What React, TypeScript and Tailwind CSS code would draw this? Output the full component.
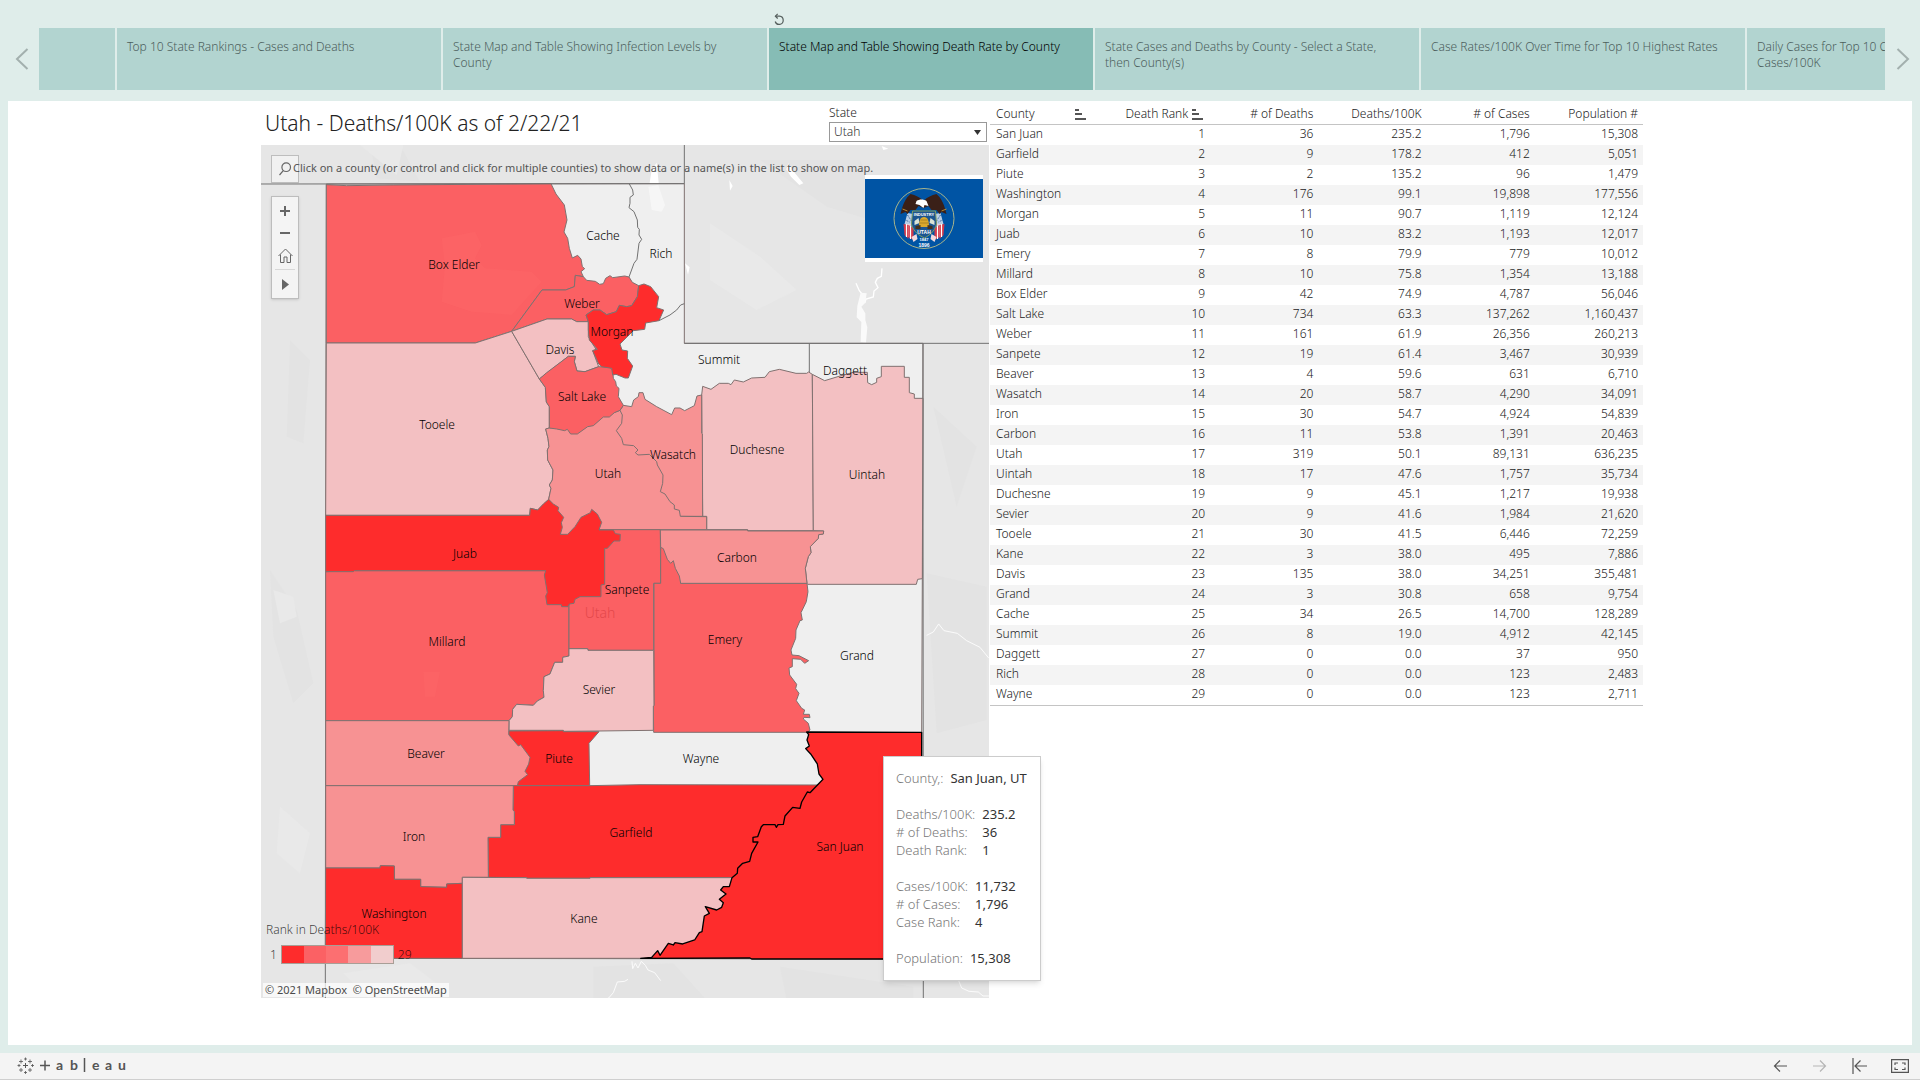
import React from "react";

const FONT = "font-['Noto_Sans','Open_Sans',sans-serif]";

const TABS = [
  { label: "", active: false },
  { label: "Top 10 State Rankings - Cases and Deaths", active: false },
  { label: "State Map and Table Showing Infection Levels by County", active: false },
  { label: "State Map and Table Showing Death Rate by County", active: true },
  { label: "State Cases and Deaths by County - Select a State, then County(s)", active: false },
  { label: "Case Rates/100K Over Time for Top 10 Highest Rates", active: false },
  { label: "Daily Cases for Top 10 Counties by Cases/100K", active: false },
];

const ROWS: string[][] = [
  ["San Juan", "1", "36", "235.2", "1,796", "15,308"],
  ["Garfield", "2", "9", "178.2", "412", "5,051"],
  ["Piute", "3", "2", "135.2", "96", "1,479"],
  ["Washington", "4", "176", "99.1", "19,898", "177,556"],
  ["Morgan", "5", "11", "90.7", "1,119", "12,124"],
  ["Juab", "6", "10", "83.2", "1,193", "12,017"],
  ["Emery", "7", "8", "79.9", "779", "10,012"],
  ["Millard", "8", "10", "75.8", "1,354", "13,188"],
  ["Box Elder", "9", "42", "74.9", "4,787", "56,046"],
  ["Salt Lake", "10", "734", "63.3", "137,262", "1,160,437"],
  ["Weber", "11", "161", "61.9", "26,356", "260,213"],
  ["Sanpete", "12", "19", "61.4", "3,467", "30,939"],
  ["Beaver", "13", "4", "59.6", "631", "6,710"],
  ["Wasatch", "14", "20", "58.7", "4,290", "34,091"],
  ["Iron", "15", "30", "54.7", "4,924", "54,839"],
  ["Carbon", "16", "11", "53.8", "1,391", "20,463"],
  ["Utah", "17", "319", "50.1", "89,131", "636,235"],
  ["Uintah", "18", "17", "47.6", "1,757", "35,734"],
  ["Duchesne", "19", "9", "45.1", "1,217", "19,938"],
  ["Sevier", "20", "9", "41.6", "1,984", "21,620"],
  ["Tooele", "21", "30", "41.5", "6,446", "72,259"],
  ["Kane", "22", "3", "38.0", "495", "7,886"],
  ["Davis", "23", "135", "38.0", "34,251", "355,481"],
  ["Grand", "24", "3", "30.8", "658", "9,754"],
  ["Cache", "25", "34", "26.5", "14,700", "128,289"],
  ["Summit", "26", "8", "19.0", "4,912", "42,145"],
  ["Daggett", "27", "0", "0.0", "37", "950"],
  ["Rich", "28", "0", "0.0", "123", "2,483"],
  ["Wayne", "29", "0", "0.0", "123", "2,711"],
];

const RED = "#fe2c2c";
const MID = "#fb6063";
const SOFT = "#f79293";
const PALE = "#f3c0c2";
const NONE = "#efefef";

const COUNTIES: { name: string; fill: string; points: string }[] = [
  { name: "Utah state", fill: NONE, points: "199,132 1273,131 1273,610 1989,610 1987,1316 1985,1776 1985,2457 196,2455 198,610" },
  { name: "Duchesne", fill: PALE, points: "1325,765 1328,739 1353,748 1378,730 1405,730 1413,734 1423,720 1450,726 1475,714 1515,712 1528,695 1558,688 1608,700 1640,700 1646,696 1657,703 1660,1172 1463,1172 1463,1169 1340,1169 1340,1129 1328,1129" },
  { name: "Uintah", fill: PALE, points: "1657,703 1694,722 1740,708 1780,697 1822,697 1823,728 1835,734 1850,727 1850,715 1864,710 1864,679 1933,679 1933,712 1948,712 1948,758 1963,762 1963,775 1989,775 1987,1316 1973,1318 1969,1333 1643,1333 1641,1330 1636,1285 1645,1250 1653,1238 1651,1220 1675,1195 1676,1184 1690,1182 1691,1173 1660,1172" },
  { name: "Box Elder", fill: MID, points: "199,134 260,137 400,135 873,131 888,162 913,195 921,240 912,276 923,295 928,325 937,354 953,346 963,357 967,380 974,386 963,395 970,410 946,406 943,440 917,450 846,450 755,574 646,609 199,609" },
  { name: "Tooele", fill: PALE, points: "199,609 646,609 755,574 838,717 856,742 859,786 868,800 868,864 857,867 864,895 867,920 862,930 863,960 879,990 877,1020 868,1035 873,1045 866,1078 833,1110 811,1105 809,1126 197,1126" },
  { name: "Wasatch", fill: SOFT, points: "1080,811 1090,796 1115,800 1121,780 1135,770 1137,758 1149,758 1155,778 1190,800 1235,824 1244,804 1260,804 1274,812 1303,797 1311,768 1325,765 1325,880 1327,882 1328,1129 1261,1129 1060,900" },
  { name: "Utah", fill: SOFT, points: "868,864 1000,840 1080,811 1087,825 1085,850 1069,872 1085,895 1090,914 1121,917 1134,930 1126,938 1134,945 1168,943 1190,965 1192,975 1209,1005 1208,1030 1201,1055 1215,1062 1230,1085 1243,1095 1243,1107 1258,1111 1261,1129 1340,1130 1340,1169 1015,1169 905,1190 866,1078 873,1045 868,1035 877,1020 879,990 863,960 862,930 867,920 864,895 857,867" },
  { name: "Weber", fill: MID, points: "846,450 917,450 943,440 946,406 970,410 980,421 1006,424 1019,433 1030,431 1037,415 1050,407 1058,413 1094,408 1107,411 1117,427 1136,437 1132,470 1115,497 1100,500 1078,496 1069,515 1040,524 1020,510 1000,510 978,525 985,545 950,545 935,537 861,537 755,574" },
  { name: "Davis", fill: PALE, points: "755,574 861,537 935,537 950,545 985,545 985,590 1008,628 998,632 1016,680 975,695 951,693 943,665 946,649 925,649 838,717" },
  { name: "Salt Lake", fill: MID, points: "838,717 860,698 900,668 925,649 946,649 943,665 951,693 975,695 1016,680 1050,682 1058,690 1060,715 1067,725 1069,738 1077,745 1075,770 1090,796 1080,811 1063,818 1048,831 1030,831 1000,857 983,860 952,882 932,882 922,868 914,872 890,867 868,864 868,800 859,786 856,742" },
  { name: "Morgan", fill: RED, points: "978,525 1000,510 1020,510 1040,524 1069,515 1078,496 1100,500 1115,497 1132,470 1136,437 1152,432 1172,440 1196,470 1190,503 1211,510 1197,542 1157,549 1154,568 1120,572 1080,612 1086,630 1103,633 1102,655 1118,678 1105,714 1095,714 1068,703 1058,705 1055,685 1025,680 1016,672 998,632 1012,628 988,600 985,570 985,545" },
  { name: "Millard", fill: MID, points: "197,1295 283,1292 857,1292 927,1392 927,1548 908,1552 908,1567 884,1567 870,1602 852,1610 850,1652 852,1672 832,1683 820,1696 770,1693 758,1708 757,1730 747,1742 197,1742" },
  { name: "Sanpete", fill: MID, points: "1017,1169 1201,1169 1202,1330 1181,1330 1181,1531 984,1531 983,1526 927,1526 927,1380 1000,1300" },
  { name: "Juab", fill: RED, points: "197,1126 809,1126 811,1105 833,1110 850,1092 866,1078 880,1092 896,1102 894,1112 911,1132 904,1148 907,1162 901,1183 923,1183 945,1160 963,1132 991,1118 995,1108 1012,1122 1025,1147 1017,1170 1060,1170 1066,1181 1081,1183 1080,1203 1062,1203 1042,1225 1034,1225 1034,1333 1023,1335 1023,1370 960,1370 945,1378 942,1390 928,1392 924,1400 905,1400 904,1394 861,1394 857,1368 862,1358 853,1305 857,1292 283,1292 280,1295 197,1295" },
  { name: "Emery", fill: MID, points: "1202,1222 1262,1222 1262,1330 1641,1330 1644,1355 1639,1385 1623,1418 1627,1440 1620,1442 1608,1470 1607,1495 1593,1530 1596,1545 1617,1547 1646,1562 1634,1570 1622,1558 1597,1556 1597,1580 1587,1584 1589,1605 1610,1633 1607,1646 1617,1660 1609,1682 1625,1705 1634,1710 1630,1723 1648,1723 1650,1733 1632,1732 1630,1737 1645,1750 1650,1770 1642,1777 1181,1777 1180,1698 1182,1697 1182,1330 1202,1330" },
  { name: "Carbon", fill: SOFT, points: "1201,1170 1463,1170 1463,1173 1691,1173 1690,1182 1676,1184 1675,1195 1651,1220 1653,1238 1645,1250 1636,1285 1641,1330 1262,1330 1258,1308 1246,1285 1240,1262 1232,1270 1222,1258 1210,1226 1202,1222" },
  { name: "Sevier", fill: PALE, points: "927,1526 983,1526 984,1531 1181,1531 1182,1697 1180,1698 1180,1771 1017,1773 910,1774 910,1771 747,1771 747,1742 757,1730 758,1708 770,1693 820,1696 832,1683 852,1672 850,1652 852,1610 870,1602 884,1567 908,1567 908,1552 927,1548" },
  { name: "Piute", fill: RED, points: "746,1773 910,1772 910,1775 1017,1775 987,1810 989,1937 760,1937" },
  { name: "Beaver", fill: SOFT, points: "197,1742 747,1742 746,1784 775,1818 782,1814 810,1852 806,1872 795,1894 803,1904 775,1925 772,1937 197,1937" },
  { name: "Garfield", fill: RED, points: "760,1937 989,1937 1140,1934 1700,1935 1417,2213 990,2213 990,2215 800,2215 800,2213 685,2212 684,2092 722,2092 722,2054 763,2054 763,2015 759,2010" },
  { name: "Iron", fill: SOFT, points: "197,1937 760,1937 759,2010 763,2015 763,2054 722,2054 722,2092 684,2092 685,2212 607,2212 607,2230 560,2232 560,2242 482,2240 482,2218 403,2218 403,2178 361,2177 360,2184 197,2184" },
  { name: "Washington", fill: RED, points: "197,2184 360,2184 361,2177 403,2178 403,2218 482,2218 482,2240 560,2242 560,2232 607,2230 607,2455 196,2455" },
  { name: "Kane", fill: PALE, points: "607,2212 800,2213 800,2215 990,2215 990,2213 1417,2213 1500,2300 1300,2455 607,2455" },
];

const SAN_JUAN =
  "1142,2455 1175,2452 1193,2432 1200,2446 1225,2410 1240,2415 1245,2408 1268,2412 1304,2400 1318,2378 1326,2375 1333,2328 1348,2320 1336,2300 1370,2310 1385,2302 1390,2288 1378,2278 1398,2262 1382,2250 1390,2240 1408,2240 1416,2213 1432,2200 1433,2185 1448,2170 1469,2164 1475,2140 1494,2106 1479,2106 1479,2092 1493,2090 1504,2060 1510,2054 1545,2054 1549,2062 1554,2054 1570,2053 1575,2028 1598,2002 1620,2005 1625,1986 1642,1956 1650,1958 1689,1918 1677,1902 1672,1872 1652,1842 1637,1826 1648,1818 1641,1800 1646,1784 1640,1776 1985,1777 1985,2457 1475,2457 1470,2454";

const BORDERS = [
  "1108,132 1118,150 1120,165 1110,172 1110,190 1107,203 1122,215 1132,240 1133,262 1138,268 1137,285 1145,298 1137,310 1131,358 1122,370 1107,411",
  "1197,542 1230,525 1250,510 1262,495 1273,491",
  "1648,610 1648,696",
  "3,132 1273,131 1273,15",
  "1273,610 2190,610",
  "1989,610 1990,2580",
  "196,2455 196,2580",
];

const LABELS: [string, number, number][] = [
  ["Box Elder", 193, 120],
  ["Cache", 342, 91],
  ["Rich", 400, 109],
  ["Weber", 321, 159],
  ["Morgan", 351, 187],
  ["Davis", 299, 205],
  ["Salt Lake", 321, 252],
  ["Tooele", 176, 280],
  ["Utah", 347, 329],
  ["Wasatch", 412, 310],
  ["Summit", 458, 215],
  ["Daggett", 584, 226],
  ["Duchesne", 496, 305],
  ["Uintah", 606, 330],
  ["Juab", 204, 409],
  ["Sanpete", 366, 445],
  ["Millard", 186, 497],
  ["Sevier", 338, 545],
  ["Beaver", 165, 609],
  ["Piute", 298, 614],
  ["Carbon", 476, 413],
  ["Emery", 464, 495],
  ["Grand", 596, 511],
  ["Wayne", 440, 614],
  ["Garfield", 370, 688],
  ["San Juan", 579, 702],
  ["Iron", 153, 692],
  ["Washington", 133, 769],
  ["Kane", 323, 774],
];

function Chevron({ flip }: { flip?: boolean }) {
  return (
    <svg width="14" height="22" viewBox="0 0 14 22" fill="none" stroke="#a3b0ae" strokeWidth="2" aria-hidden="true">
      <path d={flip ? "M1.5 1 12 11 1.5 21" : "M12.5 1 2 11l10.500 10"} />
    </svg>
  );
}

function StoryNav() {
  return (
    <nav className="flex h-[101px] pt-7 pb-[11px]" aria-label="Story points">
      <button className="flex w-[39px] items-center justify-center pl-1 shrink-0" aria-label="Previous story point">
        <Chevron />
      </button>
      <div className="flex min-w-0 flex-1 gap-[2px] overflow-x-clip">
        {TABS.map((tab, i) =>
          tab.active ? (
            <div key={i} className="relative w-[324px] shrink-0">
              <button className="flex size-full items-start bg-[#86bcb5] px-[10px] pt-[11px] text-left text-xs text-black" aria-current="true">
                {tab.label}
              </button>
              <button className="absolute -top-[15px] left-[4px]" aria-label="Revert story point">
                <svg width="12" height="13" viewBox="0 0 12 13" fill="none" stroke="#555f5d" strokeWidth="1.2">
                  <path d="M2.500 3.200h4a4.100 4.100 0 1 1-4.300 5.300" />
                  <path d="M4.700 .8 2.400 3.200l2.300 2.300" />
                </svg>
              </button>
            </div>
          ) : (
            <button
              key={i}
              aria-label={tab.label || "Earlier story point"}
              className={
                (i === 0 ? "w-[76px]" : "w-[324px]") +
                " flex shrink-0 items-start bg-[#b2d4d0] px-[10px] pt-[11px] text-left text-xs text-[#4c5e5c]"
              }
            >
              <span className={i === 6 ? "w-[210px]" : "w-[290px]"}>{tab.label}</span>
            </button>
          )
        )}
      </div>
      <button className="flex w-[35px] items-center justify-center shrink-0" aria-label="Next story point">
        <Chevron flip />
      </button>
    </nav>
  );
}

function Flag() {
  return (
    <svg width="118" height="87" viewBox="0 0 118 87" role="img" aria-label="Flag of Utah">
      <rect width="118" height="87" fill="#fff" />
      <rect y="4" width="118" height="79" fill="#0054a4" />
      <circle cx="59" cy="43.500" r="30" fill="none" stroke="#a9b48a" strokeWidth="1" />
      <g transform="translate(-.5 0)">
        <path d="M47 40 40 51l1 10 6 2zM72 40l7 11-1 10-6 2z" fill="#e9d5dc" />
        <path d="M39 49l5 1v14l-4-4zM80 49l-5 1v14l4-4z" fill="#d33a4b" />
        <path d="M44 50l5 3v12l-5-3zM75 50l-5 3v12l5-3z" fill="#d33a4b" />
        <path d="M42 49v13M46 51v13M73 51v13M77 49v13" stroke="#fff" strokeWidth="1.200" />
        <path d="M43 38l6 1-3 10-6 0zM76 38l-6 1 3 10 6 0z" fill="#b9cfe6" />
        <path d="M43 40l4 6M41 45l4 2M76 40l-4 6M78 45l-4 2" stroke="#1d4f93" strokeWidth="1" strokeDasharray="1 1" />
        <path d="M59 26c-4-4-8-6-13-7-5 4-8 11-10 20l5-2 2 2 3-4 5 0 3-4 5 2 5-2 3 4 5 0 3 4 2-2 5 2c-2-9-5-16-10-20-5 1-9 3-13 7z" fill="#3a2018" />
        <path d="M52 26c3-2 7-2 10 0l2 5-4-1-1 3-4-3-4-1z" fill="#fff" />
        <path d="M38 34l5 2M82 34l-5 2" stroke="#b58a35" strokeWidth="1" />
        <path d="M48 36h23l1 13c-2 8-7 11-12 14-6-3-11-6-13-14z" fill="#1b5590" stroke="#7f9e62" strokeWidth="1" />
        <path d="M50 46l4-3 1 5-5 2zM70 46l-4-3-1 5 5 2z" fill="#dbe4d5" />
        <path d="M54.500 52c0-6 1-10 5-10s5 4 5 10z" fill="#dba92c" />
        <path d="M56 45h7M55 48h9" stroke="#8e6b1e" strokeWidth=".6" />
        <path d="M51 51l5-1v4h-5zM68 51l-5-1v4h5z" fill="#44311c" />
        <path d="M47 62l5-3 1 5-4 3zM72 62l-5-3-1 5 4 3z" fill="#f0d9de" />
      </g>
      <g fill="#fff" textAnchor="middle" fontFamily="Liberation Sans, sans-serif" fontWeight="bold">
        <text x="59" y="41" fontSize="4">INDUSTRY</text>
        <text x="59" y="59" fontSize="5">UTAH</text>
        <text x="59" y="66" fontSize="4">1847</text>
        <text x="59" y="72" fontSize="5">1896</text>
      </g>
    </svg>
  );
}

function CountyMap() {
  return (
    <svg width="728" height="853" viewBox="0 0 728 853" className="block" role="img" aria-label="Utah counties by death rate">
      <rect width="728" height="853" fill="#e6e6e6" />
      <g transform="translate(-1 -5) scale(0.33333)">
        <g fill="#e3e3e3">
          <path d="M90 600l60 60-20 250-50-20zM30 1290l80 120 50 220-60 60-60-200zM330 15l90 0 60 110-130-10zM1500 60l300 0 100 200-200-60zM2000 1300l180 40v400l-150 40zM2020 800l130 120-60 180zM1000 2480l240-10 100 110-340 0zM1560 2480l400 60v40h-380z" />
        </g>
        <g fill="#e9e9e9">
          <path d="M40 1350l60 20 10 60-50 20zM300 15l130 0-20 90zM1350 250l150 100 110 100-120 60-140-90zM60 2000l90 80-30 120-70-60zM250 2500l200-30 80 60-200 50z" />
        </g>
        <path d="M1175 90l15-22 8 80 6 50-20 20-18-70zM1275 370l14 12-5 22zM1408 120l10 18-8 14zM1585 70l20 30 25 30-12 5-25-25-14-22zM1865 18l20 8-15 4z" fill="#fff" />
        <path d="M1788 430l10 22 18 22M1866 385l-2 24-12 6 -6 12 8 16-12 10-2 18-22 6-4 12" fill="none" stroke="#fff" strokeWidth="4" />
        <path d="M1802 458l18 2-4 28-12 12 12 20 0 20 6 22-4 46-16-2 2-60-14-14 2-34z" fill="#fafafa" />
        <path d="M2000 1486l20-10 16-24 16 20 40 8 28 22 40 20 26 32" fill="none" stroke="#fbfbfb" strokeWidth="3" />
        <path d="M1116 2464l2 22 8-16 8 14 10-20 12 12 8 14 20 8 18 24M1104 2518l-10 6-22 2-12 32-14 16-20 8M2095 2520l10 24 22 10 28 2 14 12 20 0" fill="none" stroke="#fbfbfb" strokeWidth="3" />
        <g stroke="#80706f" strokeWidth="3" strokeLinejoin="round">
          {COUNTIES.map((c) => (
            <polygon key={c.name} points={c.points} fill={c.fill} />
          ))}
          {BORDERS.map((b) => (
            <polyline key={b} points={b} fill="none" stroke="#707070" />
          ))}
        </g>
        <path d="M545 295l100-20 20 40-20 40 30 30 140 10 30 30-90 100-120-10-90-30 10-110zM490 1595h50l-15 75h-30z" fill="#ff6a6b" opacity=".3" />
        <path d="M1165 140l30-5 20 60-10 20-30-5z" fill="#f8f8f8" opacity=".8" />
        <polygon points={SAN_JUAN} fill={RED} stroke="#000" strokeWidth="4" strokeLinejoin="round" />
      </g>
      <g textAnchor="middle" className="text-xs">
        {LABELS.map(([name, x, y]) => (
          <text key={name} x={x} y={y + 4} fill="#000">
            {name}
          </text>
        ))}
        <text x="339" y="473" className="text-sm" fill="#d83c40" fillOpacity=".7">
          Utah
        </text>
      </g>
    </svg>
  );
}

function MapPanel() {
  return (
    <div className="relative w-[728px]">
      <CountyMap />
      <button className="absolute left-[10px] top-[10px] flex size-7 items-center justify-center border border-[#bdbdbd] bg-[#f1f1f1]" aria-label="Search map">
        <svg width="14" height="14" viewBox="0 0 14 14" fill="none" stroke="#666" strokeWidth="1.2">
          <circle cx="8.200" cy="5.200" r="4.300" />
          <path d="M5.300 8.700 1.500 13" />
        </svg>
      </button>
      <p className="absolute left-8 top-[15px] whitespace-nowrap text-[11px] leading-4 font-normal text-[#555]">
        Click on a county (or control and click for multiple counties) to show data or a name(s) in the list to show on map.
      </p>
      <div className="absolute left-[10px] top-[51px] flex w-7 flex-col items-center border border-[#bdbdbd] bg-[#f4f4f4] shadow-sm">
        <button className="flex h-7 w-full items-center justify-center" aria-label="Zoom in">
          <svg width="10" height="10" viewBox="0 0 10 10" stroke="#666" strokeWidth="2"><path d="M0 5h10M5 0v10" /></svg>
        </button>
        <button className="flex h-4 w-full items-center justify-center" aria-label="Zoom out">
          <svg width="10" height="2" viewBox="0 0 10 2" stroke="#666" strokeWidth="2"><path d="M0 1h10" /></svg>
        </button>
        <button className="flex h-7 w-full items-center justify-center" aria-label="Reset map">
          <svg width="15" height="15" viewBox="0 0 15 15" fill="none" stroke="#666"><path d="M.5 8 7.500 1l7 7M2.500 6.500v8h3.500V9h3v5.500h3.500v-8" /></svg>
        </button>
        <span className="h-px w-5 bg-[#d8d8d8]" />
        <button className="flex h-7 w-full items-center justify-center" aria-label="Map tools">
          <svg width="7" height="11" viewBox="0 0 7 11" fill="#666"><path d="M0 0l7 5.500L0 11z" /></svg>
        </button>
      </div>
      <div className="absolute left-[604px] top-[30px]">
        <Flag />
      </div>
      <div className="absolute left-[5px] top-[777px] text-xs text-black/75">
        <div>Rank in Deaths/100K</div>
        <div className="mt-[7px] flex items-center gap-1 pl-1">
          <span>1</span>
          <div className="flex h-[19px] w-[113px] border border-[#a89e96]">
            <span className="flex-1 bg-[#fe2c2c]" />
            <span className="flex-1 bg-[#fb6164]" />
            <span className="flex-1 bg-[#fc6f71]" />
            <span className="flex-1 bg-[#f79b9c]" />
            <span className="flex-1 bg-[#f1cdcd]" />
          </div>
          <span>29</span>
        </div>
      </div>
      <div className="absolute left-[2px] top-[838px] bg-white/70 px-[2px] text-[11px] leading-[14px] font-normal whitespace-pre text-[#4a4a4a]">
        © 2021 Mapbox{"  "}© OpenStreetMap
      </div>
      <Tooltip />
    </div>
  );
}

function Pair({ name, value }: { name: string; value: string }) {
  return (
    <>
      <dt className="text-[#777]">{name}</dt>
      <dd className="font-normal text-[#333]">{value}</dd>
    </>
  );
}

function Tooltip() {
  return (
    <div role="tooltip" className="absolute left-[622px] top-[611px] flex w-[158px] flex-col gap-[18px] border border-[#ccc] bg-white pt-3 pb-[13px] pl-[12px] text-[13px] leading-[18px] whitespace-nowrap shadow-md">
      <dl className="flex gap-[7px]"><Pair name="County,:" value="San Juan, UT" /></dl>
      <dl className="grid grid-cols-[auto_1fr] gap-x-[7px]">
        <Pair name="Deaths/100K:" value="235.2" />
        <Pair name="# of Deaths:" value="36" />
        <Pair name="Death Rank:" value="1" />
      </dl>
      <dl className="grid grid-cols-[auto_1fr] gap-x-[7px]">
        <Pair name="Cases/100K:" value="11,732" />
        <Pair name="# of Cases:" value="1,796" />
        <Pair name="Case Rank:" value="4" />
      </dl>
      <dl className="flex gap-[7px]"><Pair name="Population:" value="15,308" /></dl>
    </div>
  );
}

function SortIcon() {
  return (
    <svg width="11" height="11" viewBox="0 0 11 11" fill="#555" aria-hidden="true">
      <path d="M0 0h4v2H0zM0 4h7v2H0zM0 9h11v2H0z" />
    </svg>
  );
}

function CountyTable() {
  return (
    <table className="w-[653px] table-fixed border-b border-[#c4c4c4] text-xs leading-[18px] text-[#222]">
      <colgroup>
        <col className="w-[112px]" />
        <col span={5} />
      </colgroup>
      <thead>
        <tr className="h-[23px] border-b border-[#c4c4c4]">
          <th className="pt-[4px] pl-[6px] pr-4 text-left font-light">
            <span className="flex items-center justify-between">County <SortIcon /></span>
          </th>
          <th className="pt-[4px] pr-[7px] font-light">
            <span className="flex items-center justify-end gap-1">Death Rank <SortIcon /></span>
          </th>
          {["# of Deaths", "Deaths/100K", "# of Cases", "Population #"].map((h) => (
            <th key={h} className="pt-[4px] pr-[5px] text-right font-light">{h}</th>
          ))}
        </tr>
      </thead>
      <tbody>
        {ROWS.map((row) => (
          <tr key={row[0]} className="h-5 even:bg-[#f4f4f4]">
            {row.map((cell, i) => (
              <td key={i} className={i === 0 ? "pb-[2px] pl-[6px]" : "pb-[2px] pr-[5px] text-right"}>{cell}</td>
            ))}
          </tr>
        ))}
      </tbody>
    </table>
  );
}

function Cross({ x, y, r, o }: { x: number; y: number; r: number; o: number }) {
  return <path d={`M${x - r} ${y}h${2 * r}M${x} ${y - r}v${2 * r}`} opacity={o} />;
}

function Footer() {
  return (
    <footer className="mt-2 flex h-[27px] items-center justify-between border-b border-[#cfcfcf] bg-[#f4f4f4] pl-[17px] pr-[11px]">
      <a href="#tableau" aria-label="Tableau">
        <svg width="112" height="18" viewBox="0 0 112 18" fill="none" stroke="#555">
          <Cross x={8.5} y={8.5} r={2.5} o={1} />
          <Cross x={8.5} y={2} r={1.5} o={0.8} />
          <Cross x={8.5} y={15.5} r={1.5} o={0.8} />
          <Cross x={2} y={8.5} r={1.5} o={0.8} />
          <Cross x={15.500} y={8.5} r={1.5} o={0.8} />
          <Cross x={4} y={4.5} r={2} o={0.8} />
          <Cross x={13} y={4.5} r={2} o={0.8} />
          <Cross x={4} y={13} r={2} o={0.8} />
          <Cross x={13} y={13} r={2} o={0.8} />
          <path d="M23 8.500h10M28 3.500v10" strokeWidth="1.500" />
          <path d="M67.500 1v14" strokeWidth="1.500" />
          <g fill="#555" stroke="none" fontFamily="Lato, sans-serif" fontSize="14" fontWeight="700">
            <text x="39" y="13">a</text>
            <text x="53" y="13">b</text>
            <text x="75" y="13">e</text>
            <text x="88" y="13">a</text>
            <text x="101" y="13">u</text>
          </g>
        </svg>
      </a>
      <div className="flex items-center gap-6">
        <button aria-label="Undo">
          <svg width="15" height="14" viewBox="0 0 15 14" fill="none" stroke="#555" strokeWidth="1.200"><path d="M14 7H1.500M7 1.500 1.500 7 7 12.500" /></svg>
        </button>
        <button aria-label="Redo">
          <svg width="15" height="14" viewBox="0 0 15 14" fill="none" stroke="#b5b5b5" strokeWidth="1.200"><path d="M1 7h12.500M8 1.500 13.500 7 8 12.500" /></svg>
        </button>
        <button aria-label="Revert">
          <svg width="16" height="16" viewBox="0 0 16 16" fill="none" stroke="#555" strokeWidth="1.200"><path d="M2 0v16M16 8H4M9.500 2.500 4 8l5.500 5.500" /></svg>
        </button>
        <button aria-label="Full screen">
          <svg width="18" height="14" viewBox="0 0 18 14" fill="none" stroke="#555" strokeWidth="1.200"><path d="M.6.6h16.800v12.800H.6zM4 6V4h3M11 4h3v2M14 8.500v2h-3M7 10.500H4v-2" /></svg>
        </button>
      </div>
    </footer>
  );
}

export default function App() {
  return (
    <div className={FONT + " flex min-h-screen flex-col bg-[#dfedea] font-light"}>
      <StoryNav />
      <main className="mx-2 flex-1 bg-white">
        <div className="mx-auto flex w-[1400px] items-start gap-px pl-px">
          <section>
            <div className="flex h-11 items-end justify-between pb-[3px] pl-1 pr-[2px]">
              <h1 className="self-center pt-[2px] text-[21px] leading-[24px] text-[#222]">Utah - Deaths/100K as of 2/22/21</h1>
              <div className="w-[158px]">
                <label htmlFor="state" className="block text-xs leading-[18px] text-[#222]">State</label>
                <div className="relative">
                  <select id="state" defaultValue="Utah" className="block h-5 w-full appearance-none border border-[#999] bg-white pl-1 text-xs leading-[18px] text-[#333]">
                    <option>Utah</option>
                  </select>
                  <svg className="pointer-events-none absolute right-[6px] top-2" width="7" height="5" viewBox="0 0 7 5" fill="#333"><path d="M0 0h7L3.500 5z" /></svg>
                </div>
              </div>
            </div>
            <MapPanel />
          </section>
          <CountyTable />
        </div>
      </main>
      <Footer />
    </div>
  );
}
